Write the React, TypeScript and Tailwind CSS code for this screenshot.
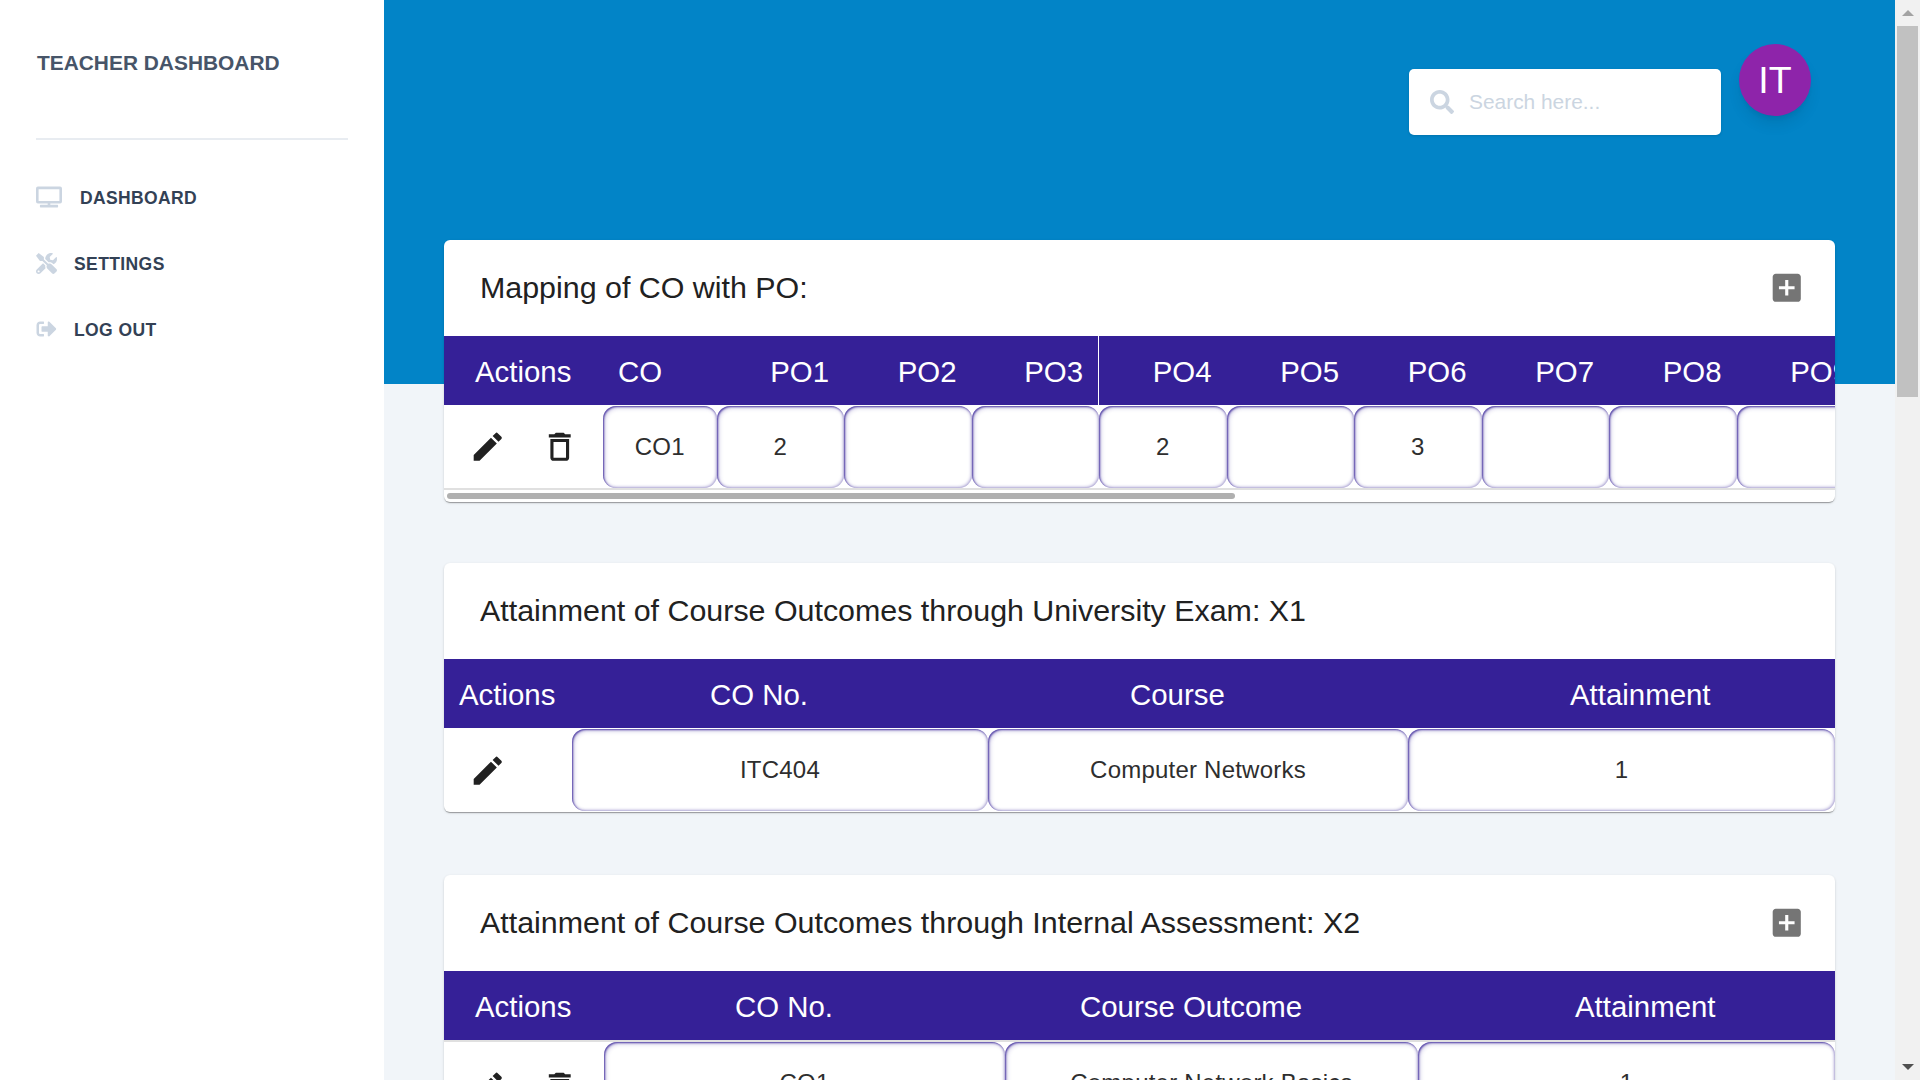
import React from "react";
import { FaTv, FaTools, FaSignOutAlt, FaSearch } from "react-icons/fa";

const font = { fontFamily: '"Liberation Sans", Arial, sans-serif' };

function Edit() {
  return (
    <svg viewBox="0 0 24 24" className="w-[37.5px] h-[37.5px] shrink-0" fill="#212121">
      <path d="M3 17.25V21h3.75L17.81 9.94l-3.75-3.75L3 17.25zM20.71 7.04c.39-.39.39-1.02 0-1.41l-2.34-2.34a.9959.9959 0 0 0-1.41 0l-1.83 1.83 3.75 3.75 1.83-1.83z" />
    </svg>
  );
}
function Trash() {
  return (
    <svg viewBox="0 0 24 24" className="w-[37.5px] h-[37.5px] shrink-0" fill="#212121">
      <path d="M6 19c0 1.1.9 2 2 2h8c1.1 0 2-.9 2-2V7H6v12zM8 9h8v10H8V9zm7.5-5l-1-1h-5l-1 1H5v2h14V4z" />
    </svg>
  );
}
function AddBox() {
  return (
    <svg viewBox="0 0 24 24" className="w-[37.5px] h-[37.5px]" fill="#757575">
      <path d="M19 3H5c-1.11 0-2 .9-2 2v14c0 1.1.89 2 2 2h14c1.1 0 2-.9 2-2V5c0-1.1-.9-2-2-2zm-2 10h-4v4h-2v-4H7v-2h4V7h2v4h4v2z" />
    </svg>
  );
}

function Cell({ w, children }: { w: string; children?: React.ReactNode }) {
  return (
    <div className={`${w} shrink-0 h-[82px] rounded-[13px] flex items-center justify-center text-[24px] tracking-[0.22px] text-[#2e2e2e] bg-white shadow-[inset_1px_1px_2px_rgba(53,32,150,0.8),inset_2px_2px_4px_rgba(53,32,150,0.25),inset_-1px_-1px_3px_rgba(53,32,150,0.35)]`}>
      {children}
    </div>
  );
}

function Card({ title, plus, mb, children }: { title: string; plus?: boolean; mb: string; children: React.ReactNode }) {
  return (
    <div className={`${mb} bg-white rounded-[6px] overflow-hidden shadow-[0_2px_1px_-1px_rgba(0,0,0,0.2),0_1px_1px_0_rgba(0,0,0,0.14),0_1px_3px_0_rgba(0,0,0,0.12)]`}>
      <div className="h-[96px] pl-[36px] pr-[30px] flex items-center justify-between">
        <span className="text-[30.4px] text-[#212121]">{title}</span>
        {plus && <AddBox />}
      </div>
      {children}
    </div>
  );
}

const pos = ["PO1", "PO2", "PO3", "PO4", "PO5", "PO6", "PO7", "PO8", "PO9"];
const vals = ["2", "", "", "2", "", "3", "", "", ""];

export default function App() {
  return (
    <div className="flex w-[1920px] h-[1080px] overflow-hidden bg-[#f1f5f9]" style={font}>
      <aside className="w-[384px] shrink-0 bg-white pl-[36px] pr-[36px]">
        <div className="h-[138px] pt-[50px] pl-[1px] text-[20.9px] leading-[25px] font-bold text-[#475569] uppercase">Teacher Dashboard</div>
        <div className="h-[2px] bg-[#e8ecf1]" />
        <nav className="pt-[25px] text-[#334155] font-bold uppercase text-[17.5px]">
          <div className="h-[66px] flex items-center">
            <FaTv className="text-[#cbd5e1] w-[26px] h-[22px] shrink-0 -mt-[2px]" />
            <span className="ml-[18px] tracking-[0.35px]">Dashboard</span>
          </div>
          <div className="h-[66px] flex items-center">
            <FaTools className="text-[#cbd5e1] w-[21px] h-[21px] shrink-0 -mt-[2px]" />
            <span className="ml-[17px] tracking-[0.4px]">Settings</span>
          </div>
          <div className="h-[66px] flex items-center">
            <FaSignOutAlt className="text-[#cbd5e1] w-[21px] h-[20px] shrink-0 -mt-[2px]" />
            <span className="ml-[17px] tracking-[0.4px]">Log Out</span>
          </div>
        </nav>
      </aside>

      <main className="w-[1511px] shrink-0">
        <div className="h-[384px] bg-[#0284c7] flex justify-end items-start pr-[84px] pt-[44px]">
          <div className="mt-[25px] w-[312px] h-[66px] bg-white rounded-[5px] shadow-sm flex items-center pl-[21px]">
            <FaSearch className="text-[#cbd5e1] w-[24px] h-[24px]" />
            <span className="ml-[15px] text-[20.9px] text-[#cbd5e1]">Search here...</span>
          </div>
          <div className="ml-[18px] w-[72px] h-[72px] rounded-full bg-[#8e24aa] text-white text-[37.5px] flex items-center justify-center shadow-lg">IT</div>
        </div>

        <div className="-mt-[144px] px-[60px]">
          <Card title="Mapping of CO with PO:" plus mb="mb-[61px]">
            <div className="overflow-hidden">
              <div className="w-[1600px]">
                <div className="h-[69px] flex items-center bg-[#352097] text-white text-[29.4px] whitespace-nowrap">
                  <div className="w-[159px] shrink-0 pl-[31px] pt-[3px]">Actions</div>
                  <div className="w-[113.5px] shrink-0 pl-[15px] pt-[3px]">CO</div>
                  {pos.map((p) => (
                    <div key={p} className={`w-[127.5px] h-full flex items-center justify-end shrink-0 pr-[15px] pt-[3px] ${p === "PO3" ? "border-r border-white" : ""}`}>{p}</div>
                  ))}
                </div>
                <div className="h-[83px] flex items-center">
                  <div className="w-[159px] shrink-0 pl-[25px] flex gap-[34px]"><Edit /><Trash /></div>
                  <Cell w="w-[113.5px]">CO1</Cell>
                  {vals.map((v, i) => <Cell key={i} w="w-[127.5px]">{v}</Cell>)}
                </div>
              </div>
            </div>
            <div className="h-[2px] bg-[#e0e0e0]" />
            <div className="h-[12px] pt-[3px] pl-[3px]">
              <div className="w-[788px] h-[6px] rounded-full bg-[#b0b0b0]" />
            </div>
          </Card>

          <Card title="Attainment of Course Outcomes through University Exam: X1" mb="mb-[63px]">
            <div className="h-[69px] pt-[3px] flex items-center bg-[#352097] text-white text-[29.4px] whitespace-nowrap">
              <div className="w-[266px] shrink-0 pl-[15px]">Actions</div>
              <div className="w-[420px] shrink-0">CO No.</div>
              <div className="w-[440px] shrink-0">Course</div>
              <div>Attainment</div>
            </div>
            <div className="h-[84px] flex items-center">
              <div className="w-[128px] shrink-0 pl-[25px] pt-[2px]"><Edit /></div>
              <Cell w="w-[416px]">ITC404</Cell>
              <Cell w="w-[420px]">Computer Networks</Cell>
              <Cell w="w-[427px]">1</Cell>
            </div>
          </Card>

          <Card title="Attainment of Course Outcomes through Internal Assessment: X2" plus mb="mb-0">
            <div className="h-[69px] pt-[3px] flex items-center bg-[#352097] text-white text-[29.4px] whitespace-nowrap">
              <div className="w-[291px] shrink-0 pl-[31px]">Actions</div>
              <div className="w-[345px] shrink-0">CO No.</div>
              <div className="w-[495px] shrink-0">Course Outcome</div>
              <div>Attainment</div>
            </div>
            <div className="h-[2px] bg-[#e0e0e0]" />
            <div className="h-[85px] flex items-start">
              <div className="w-[160px] shrink-0 pl-[25px] pt-[26px] flex gap-[34px]"><Edit /><Trash /></div>
              <Cell w="w-[401px]">CO1</Cell>
              <Cell w="w-[413px]">Computer Network Basics</Cell>
              <Cell w="w-[417px]">1</Cell>
            </div>
          </Card>
        </div>
      </main>

      <div className="w-[25px] shrink-0 bg-[#f1f1f1] flex flex-col items-center">
        <div className="h-[26px] flex items-center justify-center">
          <div className="w-0 h-0 border-l-[6px] border-r-[6px] border-b-[6px] border-l-transparent border-r-transparent border-b-[#a3a3a3]" />
        </div>
        <div className="w-[21px] h-[371px] bg-[#c1c1c1]" />
        <div className="flex-1" />
        <div className="h-[26px] flex items-center justify-center">
          <div className="w-0 h-0 border-l-[6px] border-r-[6px] border-t-[6px] border-l-transparent border-r-transparent border-t-[#505050]" />
        </div>
      </div>
    </div>
  );
}
